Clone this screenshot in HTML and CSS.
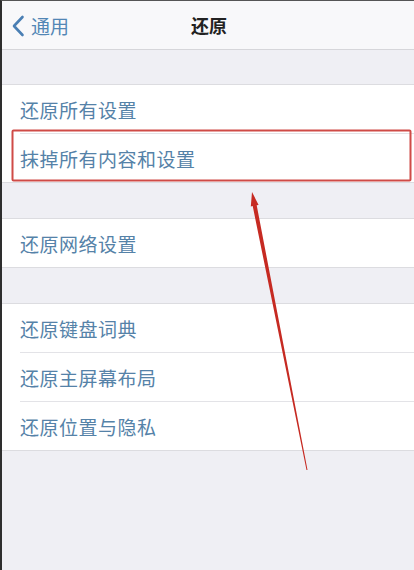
FILE: index.html
```html
<!DOCTYPE html>
<html lang="zh">
<head>
<meta charset="utf-8">
<link rel="stylesheet" href="styles.css">
</head>
<body>
<div class="screen">
  <header class="nav">
    <div class="back">
      <svg class="chev" width="14" height="22" viewBox="0 0 14 22"><path d="M11.5 2 L3 11 L11.5 20" fill="none" stroke="#4a7fb4" stroke-width="2.6" stroke-linecap="round" stroke-linejoin="round"/></svg>
      <span>通用</span>
    </div>
    <div class="title">还原</div>
  </header>
  <div class="gap g1"></div>
  <section class="group">
    <div class="row">还原所有设置</div>
    <div class="row">抹掉所有内容和设置</div>
  </section>
  <div class="gap"></div>
  <section class="group">
    <div class="row">还原网络设置</div>
  </section>
  <div class="gap"></div>
  <section class="group">
    <div class="row">还原键盘词典</div>
    <div class="row">还原主屏幕布局</div>
    <div class="row">还原位置与隐私</div>
  </section>
  <div class="rest"></div>
  <svg class="annot" width="414" height="570" viewBox="0 0 414 570">
    <rect x="12.5" y="130.5" width="398" height="50" fill="none" stroke="#cf4b47" stroke-width="2" rx="1"/>
    <polygon points="252,192 258.6,204.9 256.7,205.3 307.5,469.9 306.5,470.1 252.7,206.1 250.8,206.5" fill="#c62a22"/>
  </svg>
</div>
</body>
</html>
```
FILE: styles.css
```css
html, body {
  margin: 0;
  padding: 0;
  background: #efeff4;
}
.screen {
  position: relative;
  width: 414px;
  height: 570px;
  overflow: hidden;
  box-sizing: border-box;
  border-left: 2px solid #2e2e2e;
  border-top: 1px solid #555;
  background: #efeff4;
  font-family: "Noto Sans CJK SC", "Noto Sans", sans-serif;
}
.nav {
  position: relative;
  height: 48px;
  background: #f8f8fa;
  border-bottom: 1px solid #d6d6da;
  display: flex;
  align-items: center;
  justify-content: center;
}
.back {
  position: absolute;
  left: 9px;
  top: 0;
  height: 48px;
  display: flex;
  align-items: center;
  gap: 6px;
  color: #5286b5;
  font-size: 19px;
}
.chev { display: block; margin-top: 1px; }
.title {
  font-size: 18px;
  font-weight: 700;
  color: #222;
  margin-left: 2px;
}
.gap { height: 35px; }
.g1 { height: 34px; }
.group {
  background: #fff;
  border-top: 1px solid #dcdce0;
  border-bottom: 1px solid #dcdce0;
}
.row {
  height: 48px;
  margin-left: 18px;
  display: flex;
  align-items: center;
  font-size: 19px;
  letter-spacing: 0.5px;
  color: #5582a8;
  border-bottom: 1px solid #e3e3e7;
}
.row:last-child { border-bottom: none; }
.annot {
  position: absolute;
  left: -2px;
  top: -1px;
  pointer-events: none;
}
```
